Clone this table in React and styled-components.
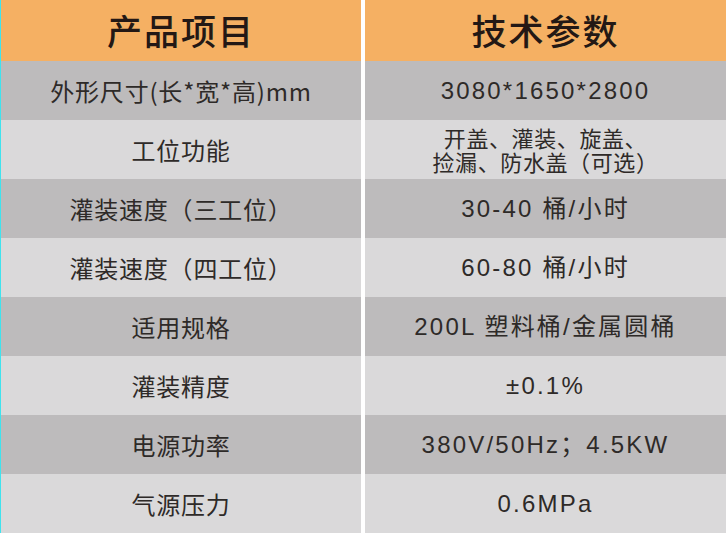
import React from 'react'
import styled, { createGlobalStyle } from 'styled-components'

const GlobalStyle = createGlobalStyle`
html, body {
    margin:0;
    padding:0;
    background:#ffffff;
}
body {
    font-family:"Noto Sans CJK SC", "Noto Sans", sans-serif;
}
`

const rows = [
    { name: '外形尺寸(长*宽*高)mm', value: ['3080*1650*2800'] },
    { name: '工位功能', value: ['开盖、灌装、旋盖、', '捡漏、防水盖（可选）'] },
    { name: '灌装速度（三工位）', value: ['30-40 桶/小时'] },
    { name: '灌装速度（四工位）', value: ['60-80 桶/小时'] },
    { name: '适用规格', value: ['200L 塑料桶/金属圆桶'] },
    { name: '灌装精度', value: ['±0.1%'] },
    { name: '电源功率', value: ['380V/50Hz；4.5KW'] },
    { name: '气源压力', value: ['0.6MPa'] },
]

const Table = styled.div`
width:726px;
height:533px;
box-sizing:border-box;
border-left:1px solid #3fe3ee;
display:grid;
grid-template-columns:360px 1fr;
grid-template-rows:61px repeat(8, 59px);
column-gap:4px;
background:#ffffff;
`

const HeadCell = styled.div`
background:#f5b063;
display:flex;
align-items:center;
justify-content:center;
font-size:35px;
font-weight:500;
letter-spacing:2px;
color:#231815;
padding-bottom:3px;
`

const Cell = styled.div`
background:${props => props.dark ? '#bdbbbc' : '#dad9da'};
display:flex;
flex-direction:column;
align-items:center;
justify-content:center;
color:#2e2a28;
white-space:nowrap;
`

const NameCell = styled(Cell)`
font-size:24px;
line-height:28px;
letter-spacing:0.8px;
`

const ValueCell = styled(Cell)`
font-family:"Liberation Sans", "Noto Sans CJK SC", sans-serif;
font-size:${props => props.small ? '22px' : '24px'};
line-height:${props => props.small ? '24px' : '28px'};
letter-spacing:${props => props.small ? '0.6px' : '2.2px'};
padding-top:${props => props.small ? '5px' : '0'};
`

const Line = styled.span`
display:block;
`

export default function App() {
    return (
        <>
            <GlobalStyle />
            <Table>
                <HeadCell>产品项目</HeadCell>
                <HeadCell>技术参数</HeadCell>
                {rows.map((r, i) => (
                    <React.Fragment key={r.name}>
                        <NameCell dark={i % 2 === 0}>{r.name}</NameCell>
                        <ValueCell dark={i % 2 === 0} small={r.value.length > 1}>
                            {r.value.map(v => <Line key={v}>{v}</Line>)}
                        </ValueCell>
                    </React.Fragment>
                ))}
            </Table>
        </>
    )
}
